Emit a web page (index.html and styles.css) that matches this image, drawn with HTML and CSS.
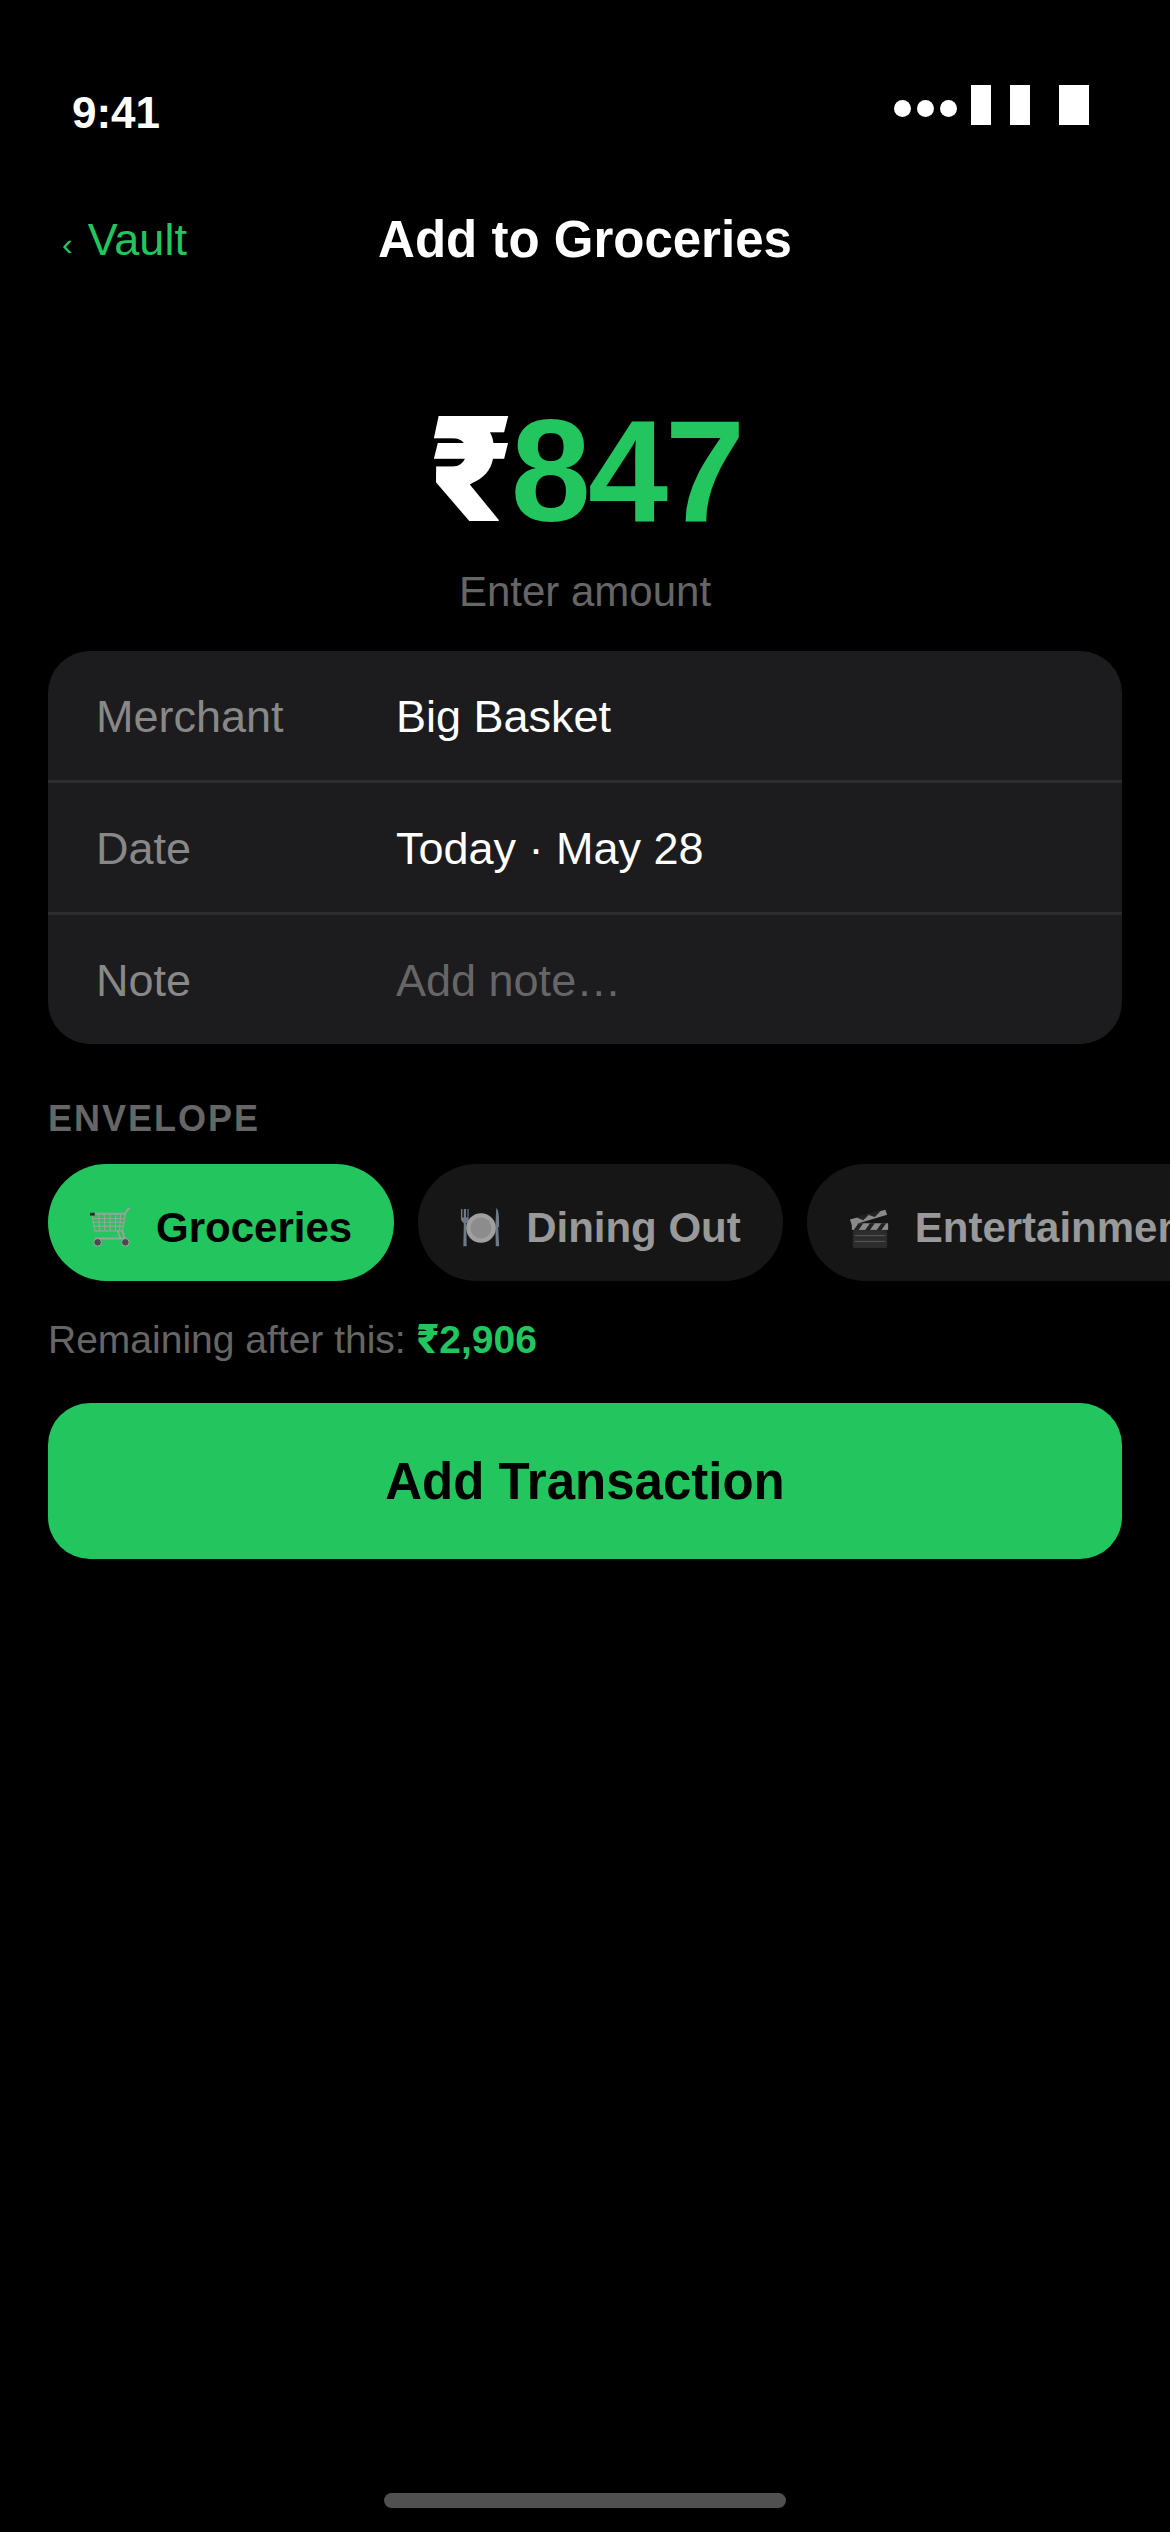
FILE: index.html
```html
<!DOCTYPE html>
<html lang="en">
<head>
<meta charset="utf-8">
<title>Add to Groceries</title>
<link rel="stylesheet" href="styles.css">
</head>
<body>
<div class="screen">
  <header class="status">
    <span class="time">9:41</span>
    <div class="status-icons">
      <div class="dots"><i></i><i></i><i></i></div>
      <div class="bars"><i></i><i></i></div>
      <div class="battery"></div>
    </div>
  </header>
  <nav class="nav">
    <a class="back"><span class="chev">‹</span><span>Vault</span></a>
    <h1 class="title">Add to Groceries</h1>
  </nav>
  <section class="amount">
    <div class="figure"><span class="cur">₹</span><span class="num">847</span></div>
    <div class="hint">Enter amount</div>
  </section>
  <section class="card">
    <div class="row"><span class="label">Merchant</span><span class="value">Big Basket</span></div>
    <div class="row"><span class="label">Date</span><span class="value">Today · May 28</span></div>
    <div class="row"><span class="label">Note</span><span class="value muted">Add note…</span></div>
  </section>
  <div class="section-label">ENVELOPE</div>
  <div class="pills">
    <div class="pill active">
      <svg class="emoji" viewBox="0 0 44 44"><g fill="none" stroke="#98a59c" stroke-width="1.200"><path d="M1 7H37L39 3L42 1" stroke-width="2"/><path d="M2 8L5 25H34L37 8"/><path d="M3 12H36M3.500 16H35.500M4 20H35M9 8L10 25M15 8L15.500 25M21 8V25M27 8L26.500 25M32 8L31 25"/><path d="M5 33H38M29 25L32 33M34 25L36 33" stroke-width="2"/></g><rect x="0" y="6" width="5" height="3" fill="#1e2a28"/><circle cx="8" cy="37" r="4" fill="#4b4b4b" stroke="#aaa"/><circle cx="37" cy="37" r="4" fill="#4b4b4b" stroke="#aaa"/></svg>
      <span>Groceries</span>
    </div>
    <div class="pill">
      <svg class="emoji" viewBox="0 0 44 44"><g fill="#6f7a86"><path d="M1 2V12C1 15 3 16 4 17L3.500 41H7L6.500 17C8 16 9 15 9 12V2H7.800V11H6.300V2H4V11H2.500V2Z"/><path d="M38 1C41 3 41 12 41 21H40L41 41H37.500L37 21Z"/></g><circle cx="22" cy="22" r="15.500" fill="#a0a0a0"/><circle cx="22" cy="22" r="11" fill="#8c8c8c"/></svg>
      <span>Dining Out</span>
    </div>
    <div class="pill">
      <svg class="emoji" viewBox="0 0 44 44"><path d="M1 13L38 3L40 8L3 19Z" fill="#8a8a8a"/><path d="M8 11L15 14L21 8L14 8ZM20 8L27 10.500L33 4.500L26 5Z" fill="#222"/><rect x="3" y="17" width="38" height="7" fill="#8a8a8a"/><path d="M10 17L5 24H10L15 17ZM22 17L17 24H22L27 17ZM34 17L29 24H34L39 17Z" fill="#222"/><rect x="4" y="24" width="36" height="19" rx="2" fill="#2c2c2c"/><path d="M6 30H38M6 36H38" stroke="#5c5c5c" stroke-width="1"/></svg>
      <span>Entertainment</span>
    </div>
  </div>
  <p class="remaining">Remaining after this: <strong><span class="rs">₹</span>2,906</strong></p>
  <button class="cta">Add Transaction</button>
  <div class="spacer"></div>
  <div class="home"></div>
</div>
</body>
</html>
```
FILE: styles.css
```css
* { box-sizing: border-box; }
html, body { margin: 0; padding: 0; background: #000; }
.screen {
  width: 1170px;
  height: 2532px;
  display: flex;
  flex-direction: column;
  overflow: hidden;
  background: #000;
  color: #fff;
  font-family: "Liberation Sans", Arial, sans-serif;
}
.status {
  height: 84px;
  margin-top: 84px;
  padding: 0 72px;
  display: flex;
  justify-content: space-between;
  align-items: flex-start;
}
.time { font-size: 44px; font-weight: 700; line-height: 54px; margin-top: 2px; }
.status-icons { display: flex; align-items: center; height: 40px; margin-right: 9px; margin-top: 1px; }
.dots { display: flex; gap: 6px; margin-top: 6px; }
.dots i { width: 17px; height: 17px; border-radius: 50%; background: #fff; display: block; }
.bars { display: flex; gap: 19px; margin-left: 14px; }
.bars i { width: 20px; height: 40px; background: #fff; display: block; }
.battery { width: 30px; height: 40px; background: #fff; margin-left: 29px; }
.nav {
  height: 72px;
  margin-top: 36px;
  padding: 0 60px;
  position: relative;
  display: flex;
  align-items: center;
  justify-content: center;
}
.back { position: absolute; left: 62px; top: 6px; color: #22c55e; font-size: 45px; line-height: 60px; display: flex; align-items: baseline; gap: 15px; }
.chev { font-size: 32px; }
.title { margin: 0; font-size: 51px; font-weight: 700; line-height: 72px; }
.amount { margin-top: 121px; text-align: center; }
.figure { font-size: 144px; line-height: 144px; font-weight: 700; letter-spacing: -3px; }
.cur { color: #fff; font-family: Inter, sans-serif; font-weight: 900; }
.num { color: #22c55e; }
.hint { font-size: 42px; line-height: 50px; color: #666; margin-top: 23px; }
.card {
  margin: 34px 48px 0;
  background: #1c1c1e;
  border-radius: 42px;
}
.row {
  height: 132px;
  display: flex;
  align-items: center;
  padding: 2px 48px 0;
  font-size: 45px;
  border-bottom: 3px solid #2c2c2e;
}
.row:last-child { border-bottom: 0; height: 129px; }
.label { width: 300px; color: #888; }
.value { color: #fff; }
.muted { color: #666; }
.section-label {
  margin: 54px 48px 0;
  font-size: 36px;
  line-height: 42px;
  font-weight: 700;
  letter-spacing: 2px;
  color: #666;
}
.pills { display: flex; gap: 24px; margin-top: 24px; padding-left: 48px; }
.pill {
  flex: none;
  height: 117px;
  padding: 10px 42px 0;
  border-radius: 59px;
  display: flex;
  align-items: center;
  gap: 24px;
  background: #161616;
  color: #999;
  font-size: 42px;
  font-weight: 700;
}
.pill.active { background: #22c55e; color: #000; }
.emoji { width: 42px; height: 42px; flex: none; }
.remaining { margin: 35px 48px 0; font-size: 39px; line-height: 46px; color: #666; }
.remaining strong { color: #22c55e; font-weight: 700; }
.rs { font-family: Inter, sans-serif; font-weight: 800; }
.cta {
  margin: 40px 48px 0;
  height: 156px;
  flex: none;
  border: 0;
  border-radius: 42px;
  background: #22c55e;
  color: #000;
  font: 700 51px "Liberation Sans", Arial, sans-serif;
}
.spacer { flex: 1; }
.home { width: 402px; height: 15px; border-radius: 8px; background: #505050; align-self: center; margin-bottom: 24px; }
```
